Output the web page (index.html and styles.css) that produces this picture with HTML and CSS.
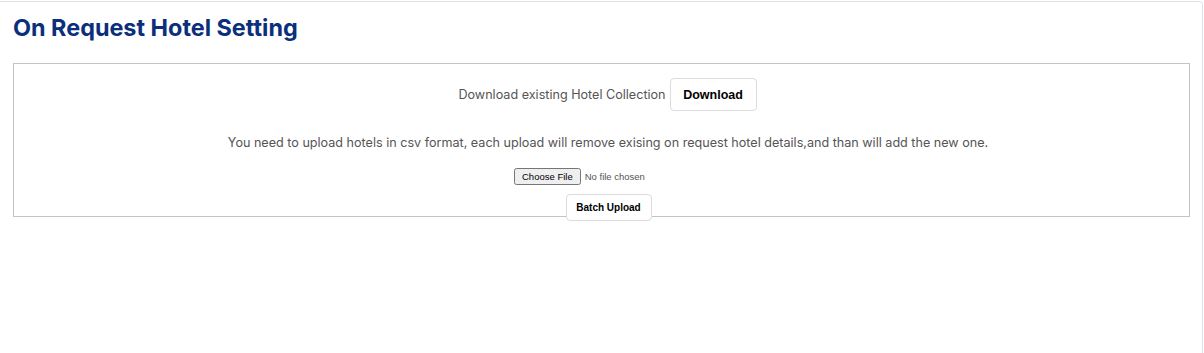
FILE: index.html
```html
<!DOCTYPE html>
<html>
<head>
    <title>On Request Hotel Setting</title>
    <link rel="stylesheet" href="styles.css">
</head>
<body>
    <div class="page-card">
        <h2 class="page-title">On Request Hotel Setting</h2>

        <div class="upload-box">
            <div class="download-row">
                <span>Download existing Hotel Collection</span>
                <button type="button" class="btn btn-download">Download</button>
            </div>

            <p class="upload-note">You need to upload hotels in csv format, each upload will remove exising on request hotel details,and than will add the new one.</p>

            <form class="upload-form">
                <input type="file" name="hotels" accept=".csv">
                <button type="submit" class="btn btn-upload">Batch Upload</button>
            </form>
        </div>
    </div>
</body>
</html>
```

FILE: styles.css
```css
body {
    margin: 0;
    font-family: Inter, "Noto Sans", sans-serif;
    background: #fff;
}

.page-card {
    margin-top: 1px;
    width: 1203px;
    height: 360px;
    border-top: 1px solid #dfe3e8;
    border-right: 1px solid #dfe3e8;
    border-top-right-radius: 4px;
    padding: 0 13px;
    box-sizing: border-box;
}

.page-title {
    margin: 0;
    padding-top: 11px;
    font-size: 23.4px;
    font-weight: 700;
    color: #0c2f7c;
    line-height: 29px;
}

.upload-box {
    margin-top: 21px;
    width: 1177px;
    box-sizing: border-box;
    border: 1px solid #c4c4c4;
    padding: 14px 0 0;
    height: 154px;
    text-align: center;
    color: #555;
    font-size: 12.6px;
}

.download-row {
    display: flex;
    justify-content: center;
    align-items: center;
    gap: 4px;
    padding-left: 12px;
}

.btn {
    background: #fff;
    border: 1px solid #dcdcdc;
    border-radius: 4px;
    color: #000;
    font-family: "Liberation Sans", Arial, sans-serif;
    font-weight: 700;
    cursor: pointer;
}

.btn-download {
    width: 87px;
    height: 33px;
    font-size: 12.5px;
}

.upload-note {
    margin: 24px 0 0;
    padding-left: 13px;
    line-height: 16px;
}

.upload-form {
    margin-top: 17px;
    display: flex;
    flex-direction: column;
    align-items: center;
    gap: 9px;
}

.upload-form input[type="file"] {
    font-family: "Liberation Sans", Arial, sans-serif;
    font-size: 9.5px;
    color: #555;
    margin-left: 5px;
}

.btn-upload {
    width: 86px;
    height: 27px;
    font-size: 10px;
    margin-left: 14px;
}
```
